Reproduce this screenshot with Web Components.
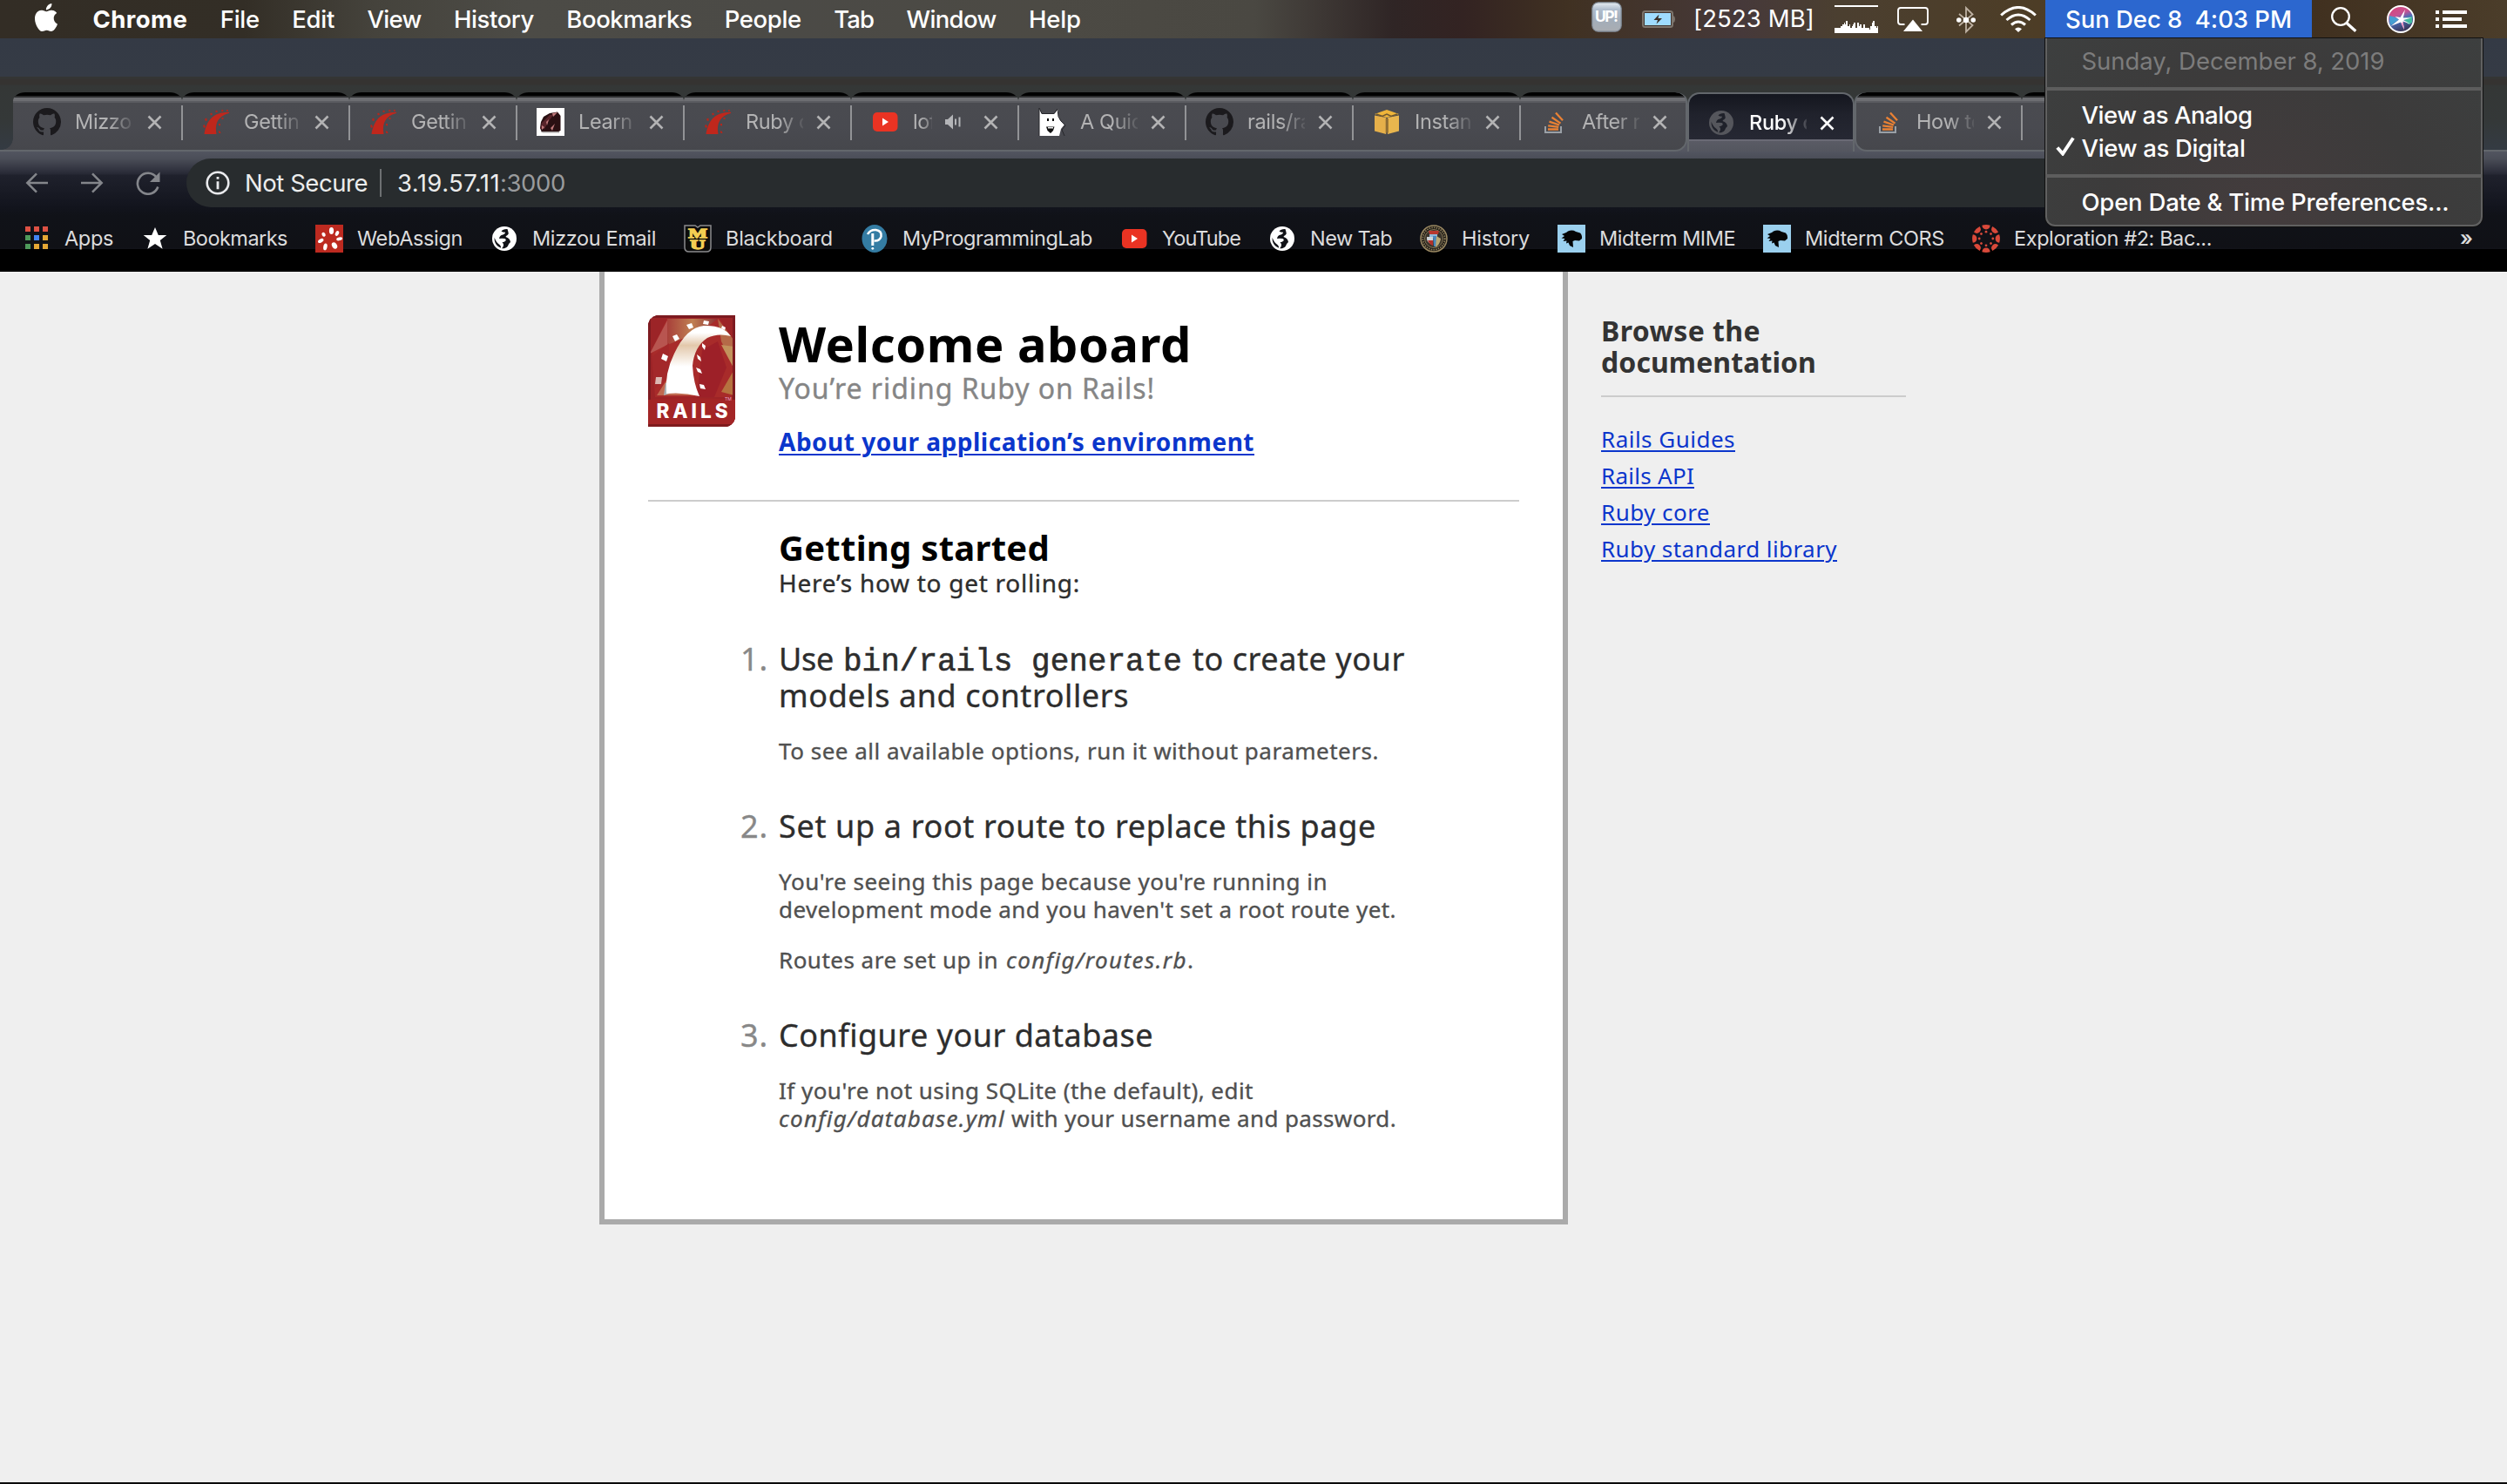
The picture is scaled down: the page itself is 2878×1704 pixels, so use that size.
<!DOCTYPE html>
<html lang="en">
<head>
<meta charset="utf-8">
<title>Ruby on Rails: Welcome aboard</title>
<style>
html,body{margin:0;padding:0;height:100%;background:#efefef;overflow:hidden}
body{font-family:Inter,"Liberation Sans",sans-serif;display:flex;flex-direction:column}
</style>
</head>
<body>
<desk-screen></desk-screen>
<script>
const ICONS = {
apple:[32,32,'0 0 24 24','<path fill="#fff" d="M12.152 6.896c-.948 0-2.415-1.078-3.96-1.04-2.04.027-3.91 1.183-4.961 3.014-2.117 3.675-.546 9.103 1.519 12.09 1.013 1.454 2.208 3.09 3.792 3.039 1.52-.065 2.09-.987 3.935-.987 1.831 0 2.35.987 3.96.948 1.637-.026 2.676-1.48 3.676-2.948 1.156-1.688 1.636-3.325 1.662-3.415-.039-.013-3.182-1.221-3.22-4.857-.026-3.04 2.48-4.494 2.597-4.559-1.429-2.09-3.623-2.324-4.39-2.376-2-.156-3.675 1.09-4.61 1.09zM15.53 3.83c.843-1.012 1.4-2.427 1.245-3.83-1.207.052-2.662.805-3.532 1.818-.78.896-1.454 2.338-1.273 3.714 1.338.104 2.715-.688 3.559-1.701"/>'],
up:[35,35,'0 0 35 35','<defs><linearGradient id="g" x2="0" y2="1"><stop offset="0" stop-color="#e8eef3"/><stop offset=".25" stop-color="#aebccc"/><stop offset=".6" stop-color="#a3adb9"/><stop offset="1" stop-color="#a9adb2"/></linearGradient></defs><rect x=".8" y=".8" width="33.4" height="33.4" rx="7" fill="url(#g)" stroke="#7d8792" stroke-width="1.2"/><text x="17.5" y="23" text-anchor="middle" font-family="Inter" font-weight="700" font-size="17.5" textLength="27" fill="#fff">UP!</text>'],
battery:[38,20,'0 0 38 20','<rect x="1" y="1" width="34" height="18" rx="2.5" fill="none" stroke="#7c746c" stroke-width="2"/><path d="M36 6q2 1 2 4t-2 4z" fill="#7c746c"/><rect x="3" y="3" width="30" height="14" fill="#9fdcff"/><path d="M19.5 4.500L13.500 11H18L16.500 15.500L23 9H18.500z" fill="#3a2f28"/>'],
graph:[50,32,'0 0 50 32','<path fill="#fff" d="M0 0h50v2H0zM0 32V26H7V24H9V22H11V20H12V22H13V18H15V24H17V22H18V26H20V24H21V22H22V20H24V26H26V20H28V24H29V22H31V26H33V22H35V26H40V28H41V24H43V20H44V18H46V24H48V26H49V24H50V32z"/>'],
airplay:[36,28,'0 0 36 28','<path d="M8.500 20H4Q1 20 1 17V4Q1 1 4 1H32Q35 1 35 4V17Q35 20 32 20H27.500" fill="none" stroke="#fff" stroke-width="1.900"/><path d="M18 14.500L29 28H7z" fill="#fff"/>'],
bluetooth:[22,32,'0 0 22 32','<path d="M3 9L18.500 22L11 29.500V2L18.500 9.500L3 22.500" fill="none" stroke="#bdb1a2" stroke-width="1.800"/><g fill="#fff"><circle cx="2.800" cy="16" r="2.800"/><circle cx="11" cy="16" r="3.300"/><circle cx="19.200" cy="16" r="2.800"/></g>'],
wifi:[42,30,'0 0 42 30','<g fill="none" stroke="#fff" stroke-width="3"><path d="M1.200 10.500Q21-7.500 40.800 10.500"/><path d="M7.500 16Q21 4 34.500 16"/><path d="M13 21.500Q21 14.500 29 21.500"/></g><path d="M17 26.200Q21 23 25 26.200L21 30z" fill="#fff"/>'],
search:[30,29,'0 0 30 29','<circle cx="11" cy="11" r="9.800" fill="none" stroke="#fff" stroke-width="2.300"/><path d="M18 18.500L28.300 27.800" stroke="#fff" stroke-width="3.200"/>'],
siri:[32,32,'0 0 32 32','<defs><linearGradient id="s" x1=".2" y1="0" x2=".6" y2="1"><stop offset="0" stop-color="#d6447a"/><stop offset=".35" stop-color="#c75291"/><stop offset=".55" stop-color="#4d6db8"/><stop offset="1" stop-color="#38304e"/></linearGradient></defs><circle cx="16" cy="16" r="15" fill="url(#s)" stroke="#fff" stroke-width="2"/><path d="M3 12Q9 13 14 16L5 23Q2 19 3 12z" fill="#479fd2"/><path d="M18 15L29 13V20Q27 21 25 22z" fill="#42bba0"/><path d="M15.500 14L21 5L18.800 14.500L28.500 14.500L19 17L28 22L18.500 18.500L20 28L16 19.500L4.500 24L14 16.500L9.500 13z" fill="#fff"/><path d="M18.500 19L20 28L16.500 21z" fill="#f293c4"/>'],
list:[36,20,'0 0 36 20','<path fill="#fff" d="M0 0h4v4H0zM0 8h4v4H0zM0 16h4v4H0zM8 0h28v4H8zM8 8h22v4H8zM8 16h28v4H8z"/>'],
github:[32,32,'0 0 16 16','<path fill="#1b1a1d" d="M8 0C3.580 0 0 3.580 0 8c0 3.540 2.290 6.530 5.470 7.590.4.070.55-.17.55-.38 0-.19-.01-.82-.01-1.490-2.010.37-2.530-.49-2.690-.94-.09-.23-.48-.94-.82-1.130-.28-.15-.68-.52-.01-.53.63-.01 1.080.58 1.230.82.72 1.210 1.870.87 2.330.66.07-.52.28-.87.51-1.070-1.780-.2-3.640-.89-3.640-3.950 0-.87.31-1.590.82-2.150-.08-.2-.36-1.020.08-2.120 0 0 .67-.21 2.200.82.64-.18 1.320-.27 2-.27s1.360.09 2 .27c1.530-1.040 2.200-.82 2.200-.82.44 1.100.16 1.920.08 2.120.51.56.82 1.270.82 2.150 0 3.070-1.870 3.750-3.650 3.950.29.25.54.73.54 1.480 0 1.070-.01 1.930-.01 2.200 0 .21.15.46.55.38A8.010 8.010 0 0 0 16 8c0-4.420-3.580-8-8-8z"/>'],
rails:[32,32,'0 0 32 32','<path d="M2.500 30C5 16 11 4.800 30.800 4.800Q31.500 5.500 30.800 6C20 9 14 16 16.500 30z" fill="#c0271c"/><g fill="#b5261c"><path d="M1 20l2-1 1 3-2 1zM3 12.500l2.300-1 .5 3-2 .5zM9 6.500l2-1 1 2-2 1zM15 3.500l2-1 1 2-2 .5zM22 2.400l2-.6.5 2-2 .4zM28 2h2l-.5 2h-1.500zM22.500 11l2 0 0 2-2 0zM19 18l2 0 0 2.500-2-.5zM18.500 26.500l2 0 1 2.500-2 0z"/></g>'],
gem:[32,32,'0 0 32 32','<path fill="#fff" d="M0 0h32v32H0z"/><path d="M8 10L15 6L24 4.500L27.500 9V26L23 28H6L4 23L5 16z" fill="#2a1013"/><path d="M6 17L15 8L20 7L14 15L9 24L4 24z" fill="#57242a"/><path d="M18 6L24 5L19 10zM11 16L14 13L12 20zM6 20L9 22L6 25zM16 23L21 18L18 26z" fill="#c07a7c"/><path d="M5 27H26V28.500H7z" fill="#a7a3a3"/>'],
youtube:[32,32,'0 0 32 32','<rect x="2" y="5" width="28.500" height="22" rx="5" fill="#ea3323"/><path d="M13 11.500L20 16L13 20.500z" fill="#fff"/>'],
cat:[32,32,'0 0 32 32','<path d="M1 0L4 7H18L23 1V9L25 14L30 19L26 24L24 32H1z" fill="#fff"/><path d="M1 0L4 6.500H18L22 1L23 10L26 15L31 20L27 25L30 32M1 0V32" fill="none" stroke="#26262b" stroke-width="1"/><path d="M10 12h2v3h-2zM16 12h2v3h-2zM9 21.500H18.500L17 26L14 29L10.500 26z" fill="#111"/><path d="M11 22H17V23.500H11z" fill="#eee"/>'],
aws:[32,32,'0 0 32 32','<path d="M2 7L16 2L30 7L16 11z" fill="#efb53a"/><path d="M2 8.500L15.200 11V30L2 26.500z" fill="#e6b04a"/><path d="M30 8.500L17 11V30L30 26.500z" fill="#e9b64e"/><path d="M14.700 12H17.800V28.500H14.700z" fill="#8f6d33"/><path d="M4 7L11 9.500L16 7L21 9.500L28 7" stroke="#6f5830" stroke-width="1.500" fill="none"/>'],
so:[32,32,'0 0 32 32','<path d="M6 21V28H24V21" fill="none" stroke="#9aa0a6" stroke-width="2"/><g stroke="#e98134" stroke-width="2.300"><path d="M9 24.500H21M9.200 20.300L21.200 21.800M10.500 15.600L22 19.500M13.500 10.800L23.500 17.600M18 5.500L26 14.300" /></g>'],
globe:[32,32,'0 0 32 32','<circle cx="16" cy="16" r="14" fill="var(--g,#fff)"/><path d="M19.500 5Q14.500 4.700 12.500 7.500Q13.800 8.700 17 8.800Q17 11 13.500 11.800Q10.500 12.500 10 16Q13 15.600 16.500 16Q18.500 16.800 17.500 18.500Q16 20 13.500 20.300Q15.500 22 15 24Q14.500 26 13 27.300Q18 27.600 20 24.500Q20.500 22 23 20Q22.500 15.500 17.500 14Q17.500 12.800 19.500 12Q21.500 10.500 20.500 8.500zM4.600 14.800Q4.200 20 7 23.300Q8.800 25.600 12 26.700Q12.500 24.500 10.500 23Q6.500 20.500 4.600 14.800z" fill="var(--b,#111217)"/>'],
x:[17,17,'0 0 17 17','<path d="M1.500 1.500L15.500 15.500M15.500 1.500L1.500 15.500" stroke="currentColor" stroke-width="2.600"/>'],
audio:[18,20,'0 0 18 20','<path d="M0 7H3L9 1.500V18.500L3 13H0z" fill="#b4b5b8"/><path d="M12 6.500V13.500M16.500 4.500V15.500" stroke="#b4b5b8" stroke-width="2"/>'],
back:[26,24,'0 0 26 24','<path d="M13 1.300L2.300 12L13 22.700M2 12H26" fill="none" stroke="#84868b" stroke-width="2.500"/>'],
fwd:[26,24,'0 0 26 24','<path d="M13 1.300L23.700 12L13 22.700M24 12H0" fill="none" stroke="#84868b" stroke-width="2.500"/>'],
reload:[28,27,'0 0 28 27','<path d="M25.300 17.500A12 12 0 1 1 23.500 6.500" fill="none" stroke="#84868b" stroke-width="2.600"/><path d="M27.500 .5V12H16z" fill="#84868b"/>'],
info:[28,28,'0 0 28 28','<circle cx="14" cy="14" r="12.300" fill="none" stroke="#e9eaed" stroke-width="2.600"/><path d="M12.600 7h2.800v2.800h-2.800zM12.600 12.200h2.800v9h-2.800z" fill="#e9eaed"/>'],
apps:[32,32,'0 0 32 32','<g><path fill="#dd5144" d="M3 2h6v6H3zM13 2h6v6h-6zM23 2h6v6h-6z"/><path fill="#4e9a5b" d="M3 12h6v6H3zM3 22h6v6H3z"/><path fill="#4285f4" d="M13 12h6v6h-6z"/><path fill="#e5a735" d="M23 12h6v6h-6zM13 22h6v6h-6zM23 22h6v6h-6z"/></g>'],
star:[32,32,'0 0 32 32','<path fill="#fff" d="M16 3L19.800 12H29.300L21.800 18L24.600 27.800L16 22L7.400 27.800L10.200 18L2.700 12H12.200z"/>'],
webassign:[32,32,'0 0 32 32','<path fill="#bd2a20" d="M0 0h32v32H0z"/><g fill="#fff"><ellipse cx="18.500" cy="7" rx="2.600" ry="4"/><ellipse cx="25" cy="10" rx="2" ry="3" transform="rotate(25 25 10)"/><ellipse cx="27.500" cy="16.500" rx="3.500" ry="1.800" transform="rotate(-15 27 16)"/><ellipse cx="22" cy="24" rx="2.800" ry="4" transform="rotate(-30 22 24)"/><ellipse cx="11.500" cy="25.500" rx="2.200" ry="4" transform="rotate(10 12 25)"/><ellipse cx="6" cy="18.500" rx="3.500" ry="2" transform="rotate(-30 6 18)"/><ellipse cx="9.500" cy="11" rx="2" ry="2.600" transform="rotate(-30 10 11)"/></g>'],
mu:[32,32,'0 0 32 32','<path d="M1 1H13L16 3L19 1H31V26Q31 31 26 31H6Q1 31 1 26z" fill="#0c0c0c" stroke="#8a8a8d" stroke-width="1.500"/><g font-family="Liberation Serif" font-weight="700" fill="#f3cd52" stroke="#f3cd52" stroke-width="1.400" text-anchor="middle"><text transform="translate(16 15) scale(1.350 .9)" font-size="17">M</text><text transform="translate(16 28) scale(1.500 .95)" font-size="16">U</text></g>'],
pearson:[32,32,'0 0 32 32','<ellipse cx="16" cy="16" rx="14.500" ry="16" fill="#347ca3"/><path d="M8 11Q11 5.500 17.500 6Q24.500 7 23.500 13.500Q22 19 15.500 18.500" fill="none" stroke="#fff" stroke-width="2.600"/><path d="M13.800 10V24" stroke="#fff" stroke-width="3"/><circle cx="13.800" cy="27.300" r="1.400" fill="#fff"/>'],
seal:[32,32,'0 0 32 32','<circle cx="16" cy="16" r="15" fill="#1d1a16" stroke="#9c8a63" stroke-width="1.500"/><circle cx="16" cy="16" r="12.700" fill="none" stroke="#8d7d59" stroke-width="1.800" stroke-dasharray="1.500 1.200"/><circle cx="16" cy="16" r="10.500" fill="#3a342b" stroke="#9c8a63" stroke-width=".8"/><path d="M10 7H22L21 11H11z" fill="#b8382f"/><path d="M11 11H20V15H11z" fill="#8fb8d8"/><path d="M8 14H15V23Q9 21 8 17z" fill="#cfd4d8"/><path d="M9 18H15V24Q11 23 9 18z" fill="#b3322b"/><path d="M15 13H19V25H16z" fill="#4a86bd"/><path d="M19 13L24 16Q23 23 18 26z" fill="#bba873"/>'],
tiger:[32,32,'0 0 32 32','<path fill="#9bd0ee" d="M0 0h32v32H0z"/><path fill="#050505" d="M5 11L10 9L12 7.500Q17 5.500 21 8L26 9.500Q28.500 12 28 16L25 18.500L20 18L17.500 19L18 26L14 24L12.500 20.500L10 21.500L10.500 18.500L6.500 19L8.500 16L4.500 15.500L8 13z"/>'],
canvas:[32,32,'0 0 32 32','<defs><g id="k"><path d="M11.300 .8Q16-.6 20.700.8Q20 5.400 16 5.400T11.300.8z"/><circle cx="16" cy="8.200" r="1.400"/></g></defs><g fill="#d9493a"><use href="#k"/><use href="#k" transform="rotate(45 16 16)"/><use href="#k" transform="rotate(90 16 16)"/><use href="#k" transform="rotate(135 16 16)"/><use href="#k" transform="rotate(180 16 16)"/><use href="#k" transform="rotate(225 16 16)"/><use href="#k" transform="rotate(270 16 16)"/><use href="#k" transform="rotate(315 16 16)"/></g>'],
check:[22,22,'0 0 22 22','<path d="M1.800 12.500L8 19.500L20 1.500" fill="none" stroke="#fff" stroke-width="4"/>'],
logo:[100,128,'0 0 100 128','<defs><clipPath id="c"><path d="M10 0H100V118Q98 126 90 128H0V10Q2 2 10 0z"/></clipPath><linearGradient id="r" x2="0" y2="1"><stop offset="0" stop-color="#fff"/><stop offset=".1" stop-color="#fff"/><stop offset=".28" stop-color="#e3c8ab"/><stop offset=".58" stop-color="#fff"/></linearGradient><linearGradient id="t" x2="1"><stop offset="0" stop-color="#a8403a"/><stop offset=".5" stop-color="#c08052"/><stop offset="1" stop-color="#8f2f33"/></linearGradient></defs><g clip-path="url(#c)"><path fill="#9c2427" d="M0 0h100v128H0z"/><path d="M22 4H82L98 30L96 94H8L4 40z" fill="#a82b2a"/><path d="M22 4H80L62 18L22 34z" fill="url(#t)"/><path d="M22 6L2 44L22 34z" fill="#b85550"/><path d="M4 48L24 32L24 70L8 84z" fill="#a3282a"/><path d="M80 4L98 28L99 60L84 30z" fill="#b56a48"/><path d="M84 34L99 62V36z" fill="#c2925c"/><path d="M62 40L80 30L90 60L76 94H56z" fill="#9d2028"/><path d="M99 62L84 88L99 92z" fill="#b6723f"/><path d="M24 70L10 92H56L28 60z" fill="#c06a50"/><path d="M0 0H100V3H0zM0 0H3V128H0zM97 0H100V128H97z" fill="#7d1a20"/><path d="M0 97Q50 93 100 97V128H0z" fill="#a32526"/><path d="M0 125H100V128H0z" fill="#7f1b1d"/><path d="M20 78L27 76L24 90L18 92z" fill="#a9b3b7"/><path d="M21 90Q19 66 30 44Q44 14 64 12Q86 11 95 24Q80 20 68 26Q53 36 51 58Q52 78 59 93Q40 88 21 90z" fill="url(#r)"/><g fill="#fff"><path d="M28 24l5-2 3 5-5 3zM44 11l6-2 2 5-5 2zM64 6l6 1-1 4-6-1zM85 12l4 2-1 3-4-2zM17 44l6 3-2 6-6-3zM62 32l4 3-1 5-3-4zM56 45l4 3 1 5-4-3zM55 60l5 2 2 5-5-2zM59 79l5 1 2 5-6-1z"/></g><path d="M9 71h7l-1 8H8z" fill="#dcb9b3"/></g><text x="9.500" y="118" font-family="Inter" font-weight="800" font-size="22.500" textLength="82" fill="#fff">RAILS</text><text x="88" y="98" font-family="Inter" font-size="5" fill="#eac">TM</text>']
};

const define = (name, html, after) => customElements.define(name, class extends HTMLElement {
  connectedCallback(){
    if (this.shadowRoot) return;
    const root = this.attachShadow({mode:'open'});
    root.innerHTML = typeof html === 'function' ? html(this) : html;
    if (after) after(this, root);
  }
});

define('ui-icon', el => {
  const [w,h,box,body] = ICONS[el.getAttribute('name')];
  return `<style>:host{display:block;flex:none;width:${w}px;height:${h}px}svg{display:block}</style><svg width="${w}" height="${h}" viewBox="${box}">${body}</svg>`;
});

/* A single line of text whose tracking is set so that it fills the width "w". */
define('fit-text', `<style>:host{display:block;flex:none;white-space:pre}span{display:inline-block;white-space:pre}</style><span><slot></slot></span>`,
  (el, root) => {
    const w = +el.getAttribute('w'), span = root.querySelector('span');
    el.style.width = w + 'px';
    span.style.letterSpacing = ((w - span.getBoundingClientRect().width) / el.textContent.length).toFixed(3) + 'px';
  });

define('mac-menubar', `<style>
:host{display:flex;align-items:center;height:44px;flex:none;color:#fff;font-size:27.500px;font-weight:500;line-height:44px;
background:linear-gradient(90deg,#332d25,#332e26 280px,#45433c 430px,#4c4b46 600px,#4b4a46 900px,#4c4a44 1200px,#4a4842 1440px,#2f2525 1600px,#332322 1680px,#403122 1800px,#46393a 2000px,#4b3f30 2110px,#4d3d26 2340px,#40301f 2654px,#4b3d2a)}
.apps{display:flex;gap:37.400px;align-items:center;padding-left:37px}
.apps ui-icon{margin-top:-4px}
.status{display:flex;align-items:center;margin-left:auto;padding-right:46px}
.clock{display:flex;background:#2c67cf;height:44px;width:306px;margin-left:10px;box-sizing:border-box;padding-left:23px}
</style><div class="apps"><ui-icon name="apple"></ui-icon><fit-text w="109" style="font-weight:700">Chrome</fit-text><fit-text w="45">File</fit-text><fit-text w="49">Edit</fit-text><fit-text w="62">View</fit-text><fit-text w="92">History</fit-text><fit-text w="144">Bookmarks</fit-text><fit-text w="88">People</fit-text><fit-text w="46">Tab</fit-text><fit-text w="103">Window</fit-text><fit-text w="60">Help</fit-text></div>
<div class="status">
<ui-icon name="up" style="margin-top:-5px"></ui-icon><ui-icon name="battery" style="margin-left:23px"></ui-icon>
<fit-text w="139" style="margin-left:21px;margin-top:-3px;font-weight:400">[2523 MB]</fit-text>
<ui-icon name="graph" style="margin-left:23px"></ui-icon><ui-icon name="airplay" style="margin-left:22px"></ui-icon>
<ui-icon name="bluetooth" style="margin-left:32px;margin-top:2px"></ui-icon><ui-icon name="wifi" style="margin-left:28px"></ui-icon>
<div class="clock"><fit-text w="260">Sun Dec 8  4:03 PM</fit-text></div>
<ui-icon name="search" style="margin-left:22px"></ui-icon><ui-icon name="siri" style="margin-left:34px"></ui-icon><ui-icon name="list" style="margin-left:24px"></ui-icon>
</div>`);

define('clock-menu', `<style>
:host{display:block;position:absolute;z-index:5;left:2348px;top:44px;width:502px;height:216px;box-sizing:border-box;border:2px solid #616161;border-top:0;border-radius:0 0 11px 11px;
background:radial-gradient(circle at 50% 100%,#443c3d,#3c3b3b 55%,#3d3f3f);box-shadow:0 0 0 1px #111;color:#fff;font-size:27.500px;font-weight:500;padding-top:7px}
.row{height:38px;line-height:38px;display:flex;padding-left:39.500px;position:relative}
ui-icon{position:absolute;left:10px;top:6px}
hr{border:0;height:4px;background:#5d5d5d;margin:11px -2px 9px}
</style><div class="row" style="color:#7c7c7c;font-weight:400"><fit-text w="348">Sunday, December 8, 2019</fit-text></div><hr>
<div class="row"><fit-text w="196">View as Analog</fit-text></div><div class="row"><ui-icon name="check"></ui-icon><fit-text w="188">View as Digital</fit-text></div><hr>
<div class="row"><fit-text w="422">Open Date &amp; Time Preferences...</fit-text></div>`);

define('browser-tab', el => `<style>
:host{display:block;flex:none;width:192px;height:68px;color:#b3b3b4;position:relative}
:host([first]){width:194px}
:host([first]) .title{margin-right:17px}
.in{box-sizing:border-box;height:68px;display:flex;align-items:center;padding-left:23px;border-bottom:2px solid #63676c;border-radius:14px 14px 0 0/10px 10px 0 0;
background:linear-gradient(#000 0 4px,#2c2d2e 4px 6px,#6d6e72 6px 10px,#5b5c61 10px 12px,#4a4b50 12px,#494a50 40px,#46474c);padding-top:2px}
.title{width:66px;margin:0 15px 0 16px;overflow:hidden;white-space:nowrap;font-size:23.500px;letter-spacing:-.35px;line-height:34px;-webkit-mask-image:linear-gradient(90deg,#000 38px,transparent 70px);mask-image:linear-gradient(90deg,#000 38px,transparent 70px)}
:host([audio]) .title{width:22px;-webkit-mask-image:linear-gradient(90deg,#000 8px,transparent 30px);mask-image:linear-gradient(90deg,#000 8px,transparent 30px)}
.audio{margin-right:26px}
.sep{position:absolute;right:-1px;top:15px;width:2px;height:40px;background:#929396;z-index:1}
:host([active]) .sep,:host([before]) .sep{display:none}
:host([first])::before{content:"";position:absolute;left:-13px;bottom:2px;width:13px;height:13px;background:radial-gradient(circle at 0 0,transparent 12.500px,#46474c 13px)}
:host([first])::after{content:"";position:absolute;left:-15px;bottom:0;width:15px;height:2px;background:#63676c}
:host([before]),:host([after]){background:linear-gradient(transparent 50px,#555761 50px)}
:host([before]) .in{border-bottom-right-radius:14px;border-right:2px solid #63676c}
:host([after]) .in{border-bottom-left-radius:14px;border-left:2px solid #63676c;padding-left:21px}
:host([active]){color:#fff;--g:#55565c;--b:#1f212a;font-weight:500}
:host([active]) .in{border:2px solid #63676c;border-bottom:0;border-radius:14px 14px 0 0;padding:0 0 0 21px;background:linear-gradient(#14161f,#20222c 24px,#262833 52px,#6a6a75 52px 54px,#5a5b65 54px,#54565f)}
</style><div class="in">${el.hasAttribute('icon') ? `<ui-icon name="${el.getAttribute('icon')}"></ui-icon><div class="title"><slot></slot></div>${el.hasAttribute('audio')?'<ui-icon class="audio" name="audio"></ui-icon>':''}<ui-icon name="x"></ui-icon>`:''}</div><div class="sep"></div>`);

define('tab-strip', `<style>
:host{display:flex;flex:none;height:86px;box-sizing:border-box;padding:18px 0 0 15px;overflow:hidden;isolation:isolate;background:linear-gradient(#343534 0 3px,#353331 3px 9px,#343736 10px,#343838 50px,#343b43 84px,#63676c 84px)}
</style>
<browser-tab first icon="github">Mizzou</browser-tab><browser-tab icon="rails">Gettin</browser-tab><browser-tab icon="rails">Gettin</browser-tab><browser-tab icon="gem">Learn</browser-tab><browser-tab icon="rails">Ruby o</browser-tab><browser-tab icon="youtube" audio>lof</browser-tab><browser-tab icon="cat">A Quic</browser-tab><browser-tab icon="github">rails/ra</browser-tab><browser-tab icon="aws">Instan</browser-tab><browser-tab icon="so" before>After r</browser-tab><browser-tab icon="globe" active>Ruby o</browser-tab><browser-tab icon="so" after>How to</browser-tab><browser-tab></browser-tab>`);

define('address-bar', `<style>
:host{display:flex;align-items:center;height:72px;padding:0 0 0 29px;box-sizing:border-box;flex:none}
.omni{display:flex;align-items:center;margin-left:30px;width:2500px;height:56px;border-radius:28px;background:#282c2e;padding-left:22px;box-sizing:border-box;font-size:27.500px;line-height:56px;color:#eceded}
i{width:2px;height:32px;background:#6d7072;margin:0 18px 0 14px}
</style><ui-icon name="back"></ui-icon><ui-icon name="fwd" style="margin-left:38px"></ui-icon><ui-icon name="reload" style="margin-left:37px"></ui-icon>
<div class="omni"><ui-icon name="info"></ui-icon><fit-text w="141" style="margin-left:17px">Not Secure</fit-text><i></i><fit-text w="118">3.19.57.11</fit-text><fit-text w="75" style="color:#999b9d">:3000</fit-text></div>`);

define('book-mark', el => `<style>:host{display:flex;flex:none;align-items:center;gap:16px}</style><ui-icon name="${el.getAttribute('icon')}"></ui-icon><fit-text w="${el.getAttribute('w')}">${el.textContent}</fit-text>`);

define('bookmarks-bar', `<style>
:host{display:flex;align-items:center;gap:32px;height:66px;padding:0 39px 10px 26px;box-sizing:border-box;flex:none;font-size:23.500px;line-height:34px;color:#dcdcdd;position:relative}
.more{margin-left:auto}
</style><book-mark icon="apps" w="56">Apps</book-mark><book-mark icon="star" w="120">Bookmarks</book-mark><book-mark icon="webassign" w="121">WebAssign</book-mark><book-mark icon="globe" w="142">Mizzou Email</book-mark><book-mark icon="mu" w="123">Blackboard</book-mark><book-mark icon="pearson" w="218">MyProgrammingLab</book-mark><book-mark icon="youtube" w="90">YouTube</book-mark><book-mark icon="globe" w="94">New Tab</book-mark><book-mark icon="seal" w="78">History</book-mark><book-mark icon="tiger" w="156">Midterm MIME</book-mark><book-mark icon="tiger" w="160">Midterm CORS</book-mark><book-mark icon="canvas" w="227">Exploration #2: Bac...</book-mark><fit-text class="more" w="15" style="font-weight:600">»</fit-text>`);

define('rails-step', el => `<style>
:host{display:grid;grid-template-columns:32px 1fr;column-gap:12px;margin-left:106px}
.n{font-size:36px;line-height:42px;color:#888;position:relative;top:1px}
.b{font-size:26px;line-height:32px;color:#505050}
::slotted([slot=head]){display:block;font-size:36px;line-height:42px;color:#2d2d2d;padding-top:1px;margin-bottom:26px}
</style><fit-text class="n" w="32">${el.getAttribute('n')}.</fit-text><div class="b"><slot name="head"></slot><slot></slot></div>`);

define('rails-main', `<style>
:host{display:block;box-sizing:border-box;width:1112px;height:1094px;border:6px solid #aaa;border-top:0;background:#fff;padding:49px 50px 0;color:#000}
header{display:flex;gap:50px;border-bottom:2px solid #ccc;height:213px}
header ui-icon{margin-top:1px}
h1,h2,p{margin:0}
h1{font-size:56px;line-height:66px}
.sub{font-size:32px;line-height:37px;color:#858585}
a{display:block;text-decoration:underline;text-decoration-thickness:2px;text-underline-offset:3px}
.env{font-size:28px;line-height:34px;font-weight:700;margin-top:26px;width:545px;color:#0b36cc}
.start{margin:30px 0 49px 150px}
h2{font-size:40px;line-height:46px}
.how{font-size:28px;line-height:34px;color:#2d2d2d}
.sub,.how,rails-step{-webkit-text-stroke:.35px}
rails-step+rails-step{margin-top:49px}
.l{display:flex}
.p{margin-top:26px}
code{font:36px "Liberation Mono",monospace;line-height:42px;position:relative;top:4px;-webkit-text-stroke:.6px}
</style>
<header><ui-icon name="logo"></ui-icon><div><h1><fit-text w="474">Welcome aboard</fit-text></h1><div class="sub"><fit-text w="432">You’re riding Ruby on Rails!</fit-text></div><a class="env"><fit-text w="546" class="u">About your application’s environment</fit-text></a></div></header>
<div class="start"><h2><fit-text w="311">Getting started</fit-text></h2><div class="how"><fit-text w="346">Here’s how to get rolling:</fit-text></div></div>
<rails-step n="1"><div slot="head"><div class="l"><fit-text w="63">Use</fit-text><code style="margin-left:11px">bin/rails generate</code><fit-text w="244" style="margin-left:12px">to create your</fit-text></div><fit-text w="402">models and controllers</fit-text></div><fit-text w="689">To see all available options, run it without parameters.</fit-text></rails-step>
<rails-step n="2"><fit-text slot="head" w="686">Set up a root route to replace this page</fit-text><fit-text w="630">You're seeing this page because you're running in</fit-text><fit-text w="709">development mode and you haven't set a root route yet.</fit-text><div class="l p"><fit-text w="252">Routes are set up in</fit-text><fit-text w="208" style="margin-left:9px;font-style:italic">config/routes.rb</fit-text><span>.</span></div></rails-step>
<rails-step n="3"><fit-text slot="head" w="430">Configure your database</fit-text><fit-text w="545">If you're not using SQLite (the default), edit</fit-text><div class="l"><fit-text w="260" style="font-style:italic">config/database.yml</fit-text><fit-text w="442" style="margin-left:7px">with your username and password.</fit-text></div></rails-step>`);

define('rails-sidebar', `<style>
:host{display:block;width:350px;margin-left:38px;padding-top:50px}
h3{margin:0 0 27px;padding-bottom:20px;border-bottom:2px solid #ccc;font-size:32px;line-height:36px;color:#333}
a{display:block;line-height:42px;font-size:26px;color:#0b36cc;text-decoration:underline;text-decoration-thickness:2px;text-underline-offset:3px}
</style><h3><fit-text w="183">Browse the</fit-text><fit-text w="247">documentation</fit-text></h3>
<a><fit-text w="154">Rails Guides</fit-text></a><a><fit-text w="107">Rails API</fit-text></a><a><fit-text w="125">Ruby core</fit-text></a><a><fit-text w="271">Ruby standard library</fit-text></a>`);

/* Text decoration does not cross an inline-block, so linked lines draw their own. */
const linkSheet = new CSSStyleSheet();
linkSheet.replaceSync('span{text-decoration:inherit}:host{text-decoration:inherit}');

define('desk-screen', `<style>
:host{display:block;position:relative;width:2878px;height:1704px;box-sizing:border-box;border-bottom:2px solid #0b0b0b;overflow:hidden;background:#efefef;font-family:Inter,"Liberation Sans",sans-serif}
.title{height:44px;background:linear-gradient(#343a45,#353b45)}
.bars{background:linear-gradient(#525560,#4b4e58 8px,#2f313d 22px,#262834 26px,#1f212c 27px,#191b25 45px,#12141d 64px,#101218 74px,#101116 110px,#13141a 112px,#000 112px)}
.page{display:flex;padding-left:688px;font-family:"Noto Sans","Open Sans",sans-serif}
</style><mac-menubar></mac-menubar><div class="title"></div><tab-strip></tab-strip><div class="bars"><address-bar></address-bar><bookmarks-bar></bookmarks-bar></div>
<div class="page"><rails-main></rails-main><rails-sidebar></rails-sidebar></div><clock-menu></clock-menu>`,
(el, root) => {
  for (const part of root.querySelectorAll('rails-main,rails-sidebar'))
    for (const line of part.shadowRoot.querySelectorAll('a fit-text')) line.shadowRoot.adoptedStyleSheets = [linkSheet];
});
</script>
</body>
</html>
